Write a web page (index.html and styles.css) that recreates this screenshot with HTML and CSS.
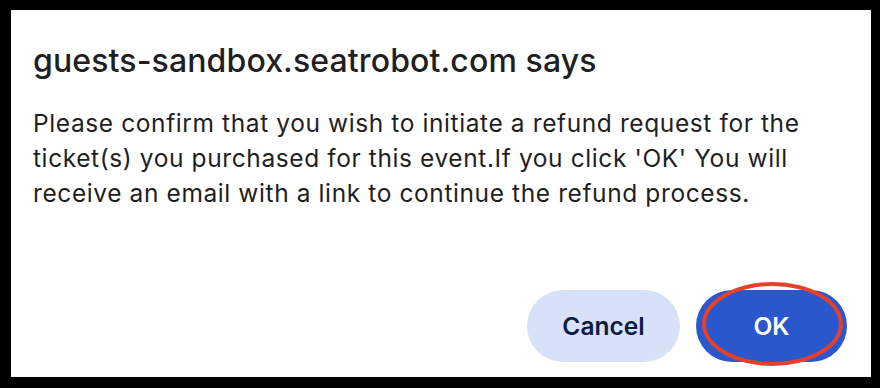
FILE: index.html
```html
<!DOCTYPE html>
<html>
<head>
<meta charset="utf-8">
<link rel="stylesheet" href="styles.css">
</head>
<body>
<div class="dialog">
  <h1 class="title">guests-sandbox.seatrobot.com says</h1>
  <p class="message">Please confirm that you wish to initiate a refund request for the ticket(s) you purchased for this event.If you click 'OK' You will receive an email with a link to continue the refund process.</p>
  <div class="actions">
    <button class="btn btn-cancel">Cancel</button>
    <button class="btn btn-ok">OK<span class="annotation"></span></button>
  </div>
</div>
</body>
</html>
```
FILE: styles.css
```css
html, body {
  margin: 0;
  padding: 0;
  background: #000;
  width: 880px;
  height: 388px;
  overflow: hidden;
}
body {
  padding: 10px 9px 11px 11px;
  box-sizing: border-box;
  display: flex;
}
.dialog {
  flex: 1;
  background: #fff;
  display: flex;
  flex-direction: column;
  padding: 0 24px 15px 22px;
  font-family: Inter, "Noto Sans", sans-serif;
  color: #1f1f1f;
}
.title {
  margin: 31px 0 0 0;
  font-size: 32px;
  font-weight: 500;
  line-height: 40px;
  letter-spacing: 0.12px;
}
.message {
  margin: 25px 0 0 0;
  font-size: 24.5px;
  line-height: 35px;
  font-weight: 400;
  letter-spacing: 0.6px;
  width: 812px;
}
.actions {
  margin-top: auto;
  display: flex;
  justify-content: flex-end;
  gap: 16px;
}
.btn {
  border: none;
  height: 72px;
  border-radius: 36px;
  font-family: Inter, "Noto Sans", sans-serif;
  font-size: 24.5px;
  font-weight: 600;
  position: relative;
  padding: 0;
}
.btn-cancel {
  width: 153px;
  background: #d7e2f9;
  color: #0c1c44;
}
.btn-ok {
  width: 151px;
  background: #2a58cc;
  color: #fff;
}
.annotation {
  position: absolute;
  left: 6px;
  right: 4px;
  top: -8px;
  bottom: -4px;
  border: 4px solid #e63f2a;
  border-radius: 50%;
}
```
